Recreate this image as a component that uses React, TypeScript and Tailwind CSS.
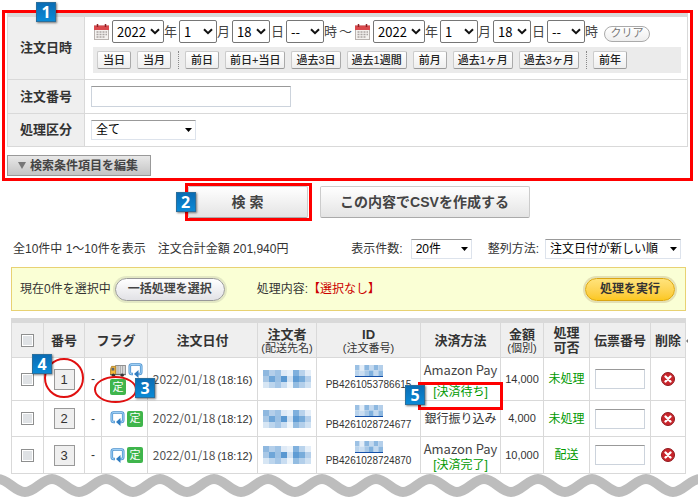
import clsx from "clsx";
import type { ReactNode } from "react";

const years = ["2022", "2021", "2020"];
const months = Array.from({ length: 12 }, (_, i) => String(i + 1));
const days = Array.from({ length: 31 }, (_, i) => String(i + 1));
const hours = ["--", ...Array.from({ length: 24 }, (_, i) => String(i))];

const quickRanges = [
  ["当日", "当月"],
  ["前日", "前日+当日", "過去3日", "過去1週間", "前月", "過去1ヶ月", "過去3ヶ月"],
  ["前年"],
];

interface Order {
  no: number;
  truck: boolean;
  time: string;
  id: string;
  pay: string;
  payStatus?: string;
  amount: string;
  state: string;
}

const orders: Order[] = [
  {
    no: 1,
    truck: true,
    time: "(18:16)",
    id: "PB4261053786615",
    pay: "Amazon Pay",
    payStatus: "[決済待ち]",
    amount: "14,000",
    state: "未処理",
  },
  {
    no: 2,
    truck: false,
    time: "(18:12)",
    id: "PB4261028724677",
    pay: "銀行振り込み",
    amount: "4,000",
    state: "未処理",
  },
  {
    no: 3,
    truck: false,
    time: "(18:12)",
    id: "PB4261028724870",
    pay: "Amazon Pay",
    payStatus: "[決済完了]",
    amount: "10,000",
    state: "配送",
  },
];

const Step = ({ n, className }: { n: number; className: string }) => (
  <span
    className={clsx(
      "absolute z-10 flex size-5 items-center justify-center border border-[#2a6f9c] bg-linear-to-b from-[#0a6cb4] to-[#0a8ad6] font-['Open_Sans'] text-base leading-none font-bold text-white shadow-[1px_1px_2px_rgba(0,0,0,0.5)]",
      className,
    )}
  >
    {n}
  </span>
);

const CalendarIcon = () => (
  <svg viewBox="0 0 15 16" className="h-4 w-[15px] shrink-0">
    <rect x="0.5" y="2" width="14" height="13.5" fill="#f4f1ef" stroke="#b9b3b0" />
    <rect x="0" y="1.5" width="15" height="4.5" fill="#d9484c" />
    <path d="M3.5 0v3M11.5 0v3" stroke="#8d2024" strokeWidth="1.5" />
    <path
      d="M2.5 8h2m1 0h2m1 0h2m1 0h1.5M2.5 10.5h2m1 0h2m1 0h2m1 0h1.5M2.5 13h2m1 0h2m1 0h2"
      stroke="#a9a4a2"
      strokeWidth="1.5"
    />
  </svg>
);

const TruckIcon = () => (
  <svg viewBox="0 0 17 13" className="h-3 w-4">
    <rect x="6" y="0.5" width="10.5" height="9.5" fill="#dcdcdc" stroke="#8a8a8a" />
    <path d="M8.5 1v9M11 1v9M13.5 1v9" stroke="#a2a2a2" />
    <path d="M0.5 10.5V4.5L1.5 1.5H6v9z" fill="#f3b93c" stroke="#b98320" />
    <rect x="1.5" y="3" width="3" height="3" fill="#5d6670" />
    <path d="M0 10.5h17" stroke="#555" />
    <circle cx="3.5" cy="11" r="1.8" fill="#333" />
    <circle cx="13" cy="11" r="1.8" fill="#333" />
  </svg>
);

const RepeatIcon = () => (
  <svg viewBox="0 0 15 15" className="size-[15px]" fill="none">
    <path
      d="M5 11H3.5Q1.8 11 1.8 9.3V3.2Q1.8 1.5 3.5 1.5h8Q13.2 1.5 13.2 3.2V9.3Q13.2 11 11.5 11H10"
      stroke="#4a90cc"
      strokeWidth="2.6"
    />
    <path
      d="M4.5 11H3.5Q1.8 11 1.8 9.3V3.2Q1.8 1.5 3.5 1.5h8Q13.2 1.5 13.2 3.2V9.3Q13.2 11 11.5 11H10"
      stroke="#9fd0f7"
      strokeWidth="1.1"
    />
    <path d="M10.5 7v8L6 11z" fill="#2f7cc0" />
  </svg>
);

const TeiIcon = () => (
  <span className="flex size-4 items-center justify-center rounded-xs bg-[#3fb54c] text-[11px] leading-none text-white">
    定
  </span>
);

const DeleteIcon = () => (
  <svg viewBox="0 0 14 14" className="size-3.5">
    <circle cx="7" cy="7" r="6.5" fill="#c9252b" stroke="#8f1b20" />
    <path d="M4.5 4.5l5 5M9.5 4.5l-5 5" stroke="#fff" strokeWidth="2.4" strokeLinecap="round" />
  </svg>
);

const nameTones = [
  ["#8fb8df", "#b4cfea", "#9fc3e5", "#dfeaf6", "#e9f1f9", "#7fb0dd", "#b9d3ec", "#e4eef8"],
  ["#a9c8e6", "#6fa6d8", "#9cc1e4", "#5a98d1", "#d0e1f2", "#5f9cd4", "#78acda", "#b5d0eb"],
  ["#d7e6f4", "#bcd5ed", "#a6c7e7", "#c9ddf1", "#edf4fa", "#93bce1", "#b3cfea", "#cfe1f2"],
];

const idTones = [
  ["#9cc1e4", "#e4eef8", "#8db8e0", "#c3d9ef", "#8db8e0", "#b4cfea"],
  ["#b9d3ec", "#c9ddf1", "#a7c8e7", "#7fb0dd", "#c3d9ef", "#8db8e0"],
];

const Mosaic = ({ tones, size, className }: { tones: string[][]; size: number; className: string }) => (
  <svg
    viewBox={`0 0 ${tones[0].length * size} ${tones.length * size}`}
    preserveAspectRatio="none"
    className={className}
    aria-hidden="true"
  >
    {tones.map((row, y) =>
      row.map((fill, x) => (
        <rect key={`${x}-${y}`} x={x * size} y={y * size} width={size} height={size} fill={fill} />
      )),
    )}
  </svg>
);

const Chevron = () => (
  <svg
    viewBox="0 0 10 7"
    className="pointer-events-none absolute top-2 right-1 h-[7px] w-2.5"
    fill="none"
    stroke="#111"
    strokeWidth="2"
  >
    <path d="M1 1.2l4 4 4-4" />
  </svg>
);

interface DateSelectProps {
  label: string;
  options: string[];
  value: string;
  wide?: boolean;
}

const DateSelect = ({ label, options, value, wide }: DateSelectProps) => (
  <span className={clsx("relative shrink-0", wide ? "w-[52px]" : "w-[38px]")}>
    <select
      aria-label={label}
      defaultValue={value}
      className="block h-[23px] w-full appearance-none rounded-xs border border-[#767676] bg-white pl-1 font-['Noto_Sans_CJK_JP'] text-[13px] leading-5 text-black"
    >
      {options.map((o) => (
        <option key={o}>{o}</option>
      ))}
    </select>
    <Chevron />
  </span>
);

const DateGroup = ({ label }: { label: string }) => (
  <div className="flex items-center text-[13px] text-[#444]">
    <button type="button" aria-label={`${label}カレンダー`} className="mr-[3px]">
      <CalendarIcon />
    </button>
    <DateSelect label={`${label}年`} options={years} value="2022" wide />
    <span className="w-[15px]">年</span>
    <DateSelect label={`${label}月`} options={months} value="1" />
    <span className="w-[15px]">月</span>
    <DateSelect label={`${label}日`} options={days} value="18" />
    <span className="w-4 pl-px">日</span>
    <DateSelect label={`${label}時`} options={hours} value="--" />
    <span>時</span>
  </div>
);

interface ListSelectProps {
  id: string;
  options: string[];
  className: string;
}

const ListSelect = ({ id, options, className }: ListSelectProps) => (
  <span className={clsx("relative inline-block", className)}>
    <select
      id={id}
      className="block h-5 w-full appearance-none border border-[#dde3ec] border-t-[#999] bg-white pl-1 text-xs leading-4 text-black"
    >
      {options.map((o) => (
        <option key={o}>{o}</option>
      ))}
    </select>
    <svg viewBox="0 0 7 4" className="pointer-events-none absolute top-2 right-1 h-1 w-[7px]">
      <path d="M0 0h7L3.5 4z" fill="#000" />
    </svg>
  </span>
);

const Row = ({ label, htmlFor, children }: { label: string; htmlFor: string; children: ReactNode }) => (
  <div className="flex border-b border-[#d9d9d9]">
    <label
      htmlFor={htmlFor}
      className="flex w-[77px] shrink-0 items-center justify-center border-r border-[#d9d9d9] bg-[#efefef] text-[13px] font-bold"
    >
      {label}
    </label>
    <div className="min-w-0 flex-1 py-1.5 pl-1.5">{children}</div>
  </div>
);

const SearchConditions = () => (
  <section className="relative mt-2.5 mr-[5px] ml-0.5 border-3 border-[#ff0000] pl-0.5">
    <Step n={1} className="-top-[11px] left-[31px]" />
    <div className="mr-0.5 border-t-4 border-r border-l border-[#d9d9d9]">
      <Row label="注文日時" htmlFor="quick-today">
        <div className="-mt-[3px] flex items-center pl-[3px]">
          <DateGroup label="開始" />
          <span className="w-[18px] pl-0.5 text-[13px] text-[#444]">～</span>
          <DateGroup label="終了" />
          <button
            type="button"
            className="mt-1 ml-1.5 h-4 w-[46px] rounded-full border border-[#aaa] bg-linear-to-b from-white to-[#eee] text-[11px] leading-none text-[#777]"
          >
            クリア
          </button>
        </div>
        <div className="mt-1 mr-1.5 ml-0.5 flex bg-[#ebebeb] px-1 py-1">
          {quickRanges.map((group, i) => (
            <div
              key={i}
              className={clsx("flex gap-1.5", i > 0 && "ml-[7px] border-l border-dotted border-[#888] pl-1.5")}
            >
              {group.map((q) => (
                <button
                  key={q}
                  id={q === "当日" ? "quick-today" : undefined}
                  type="button"
                  className={clsx(
                    "h-[18px] rounded-xs border border-[#ccc] border-r-[#aaa] border-b-[#999] bg-linear-to-b from-white to-[#eee] text-[11px] leading-none font-medium whitespace-nowrap text-[#222]",
                    q.length > 2 ? "px-1" : "px-[5px]",
                  )}
                >
                  {q}
                </button>
              ))}
            </div>
          ))}
        </div>
      </Row>
      <Row label="注文番号" htmlFor="order-no">
        <input
          id="order-no"
          type="text"
          className="block h-[21px] w-[200px] border border-[#ccd3dc] border-t-[#999] bg-white px-1 text-xs"
        />
      </Row>
      <Row label="処理区分" htmlFor="kind">
        <ListSelect id="kind" options={["全て", "未処理", "配送"]} className="w-[105px] align-top" />
      </Row>
    </div>
    <button
      type="button"
      className="mt-2 mb-0.5 flex h-[21px] w-36 items-center gap-1 border border-[#999] bg-linear-to-b from-[#e8e8e8] to-[#c4c4c4] pl-2.5 text-xs leading-none font-bold whitespace-nowrap text-[#444]"
    >
      <svg viewBox="0 0 8 7" className="h-[7px] w-2">
        <path d="M0 0h8L4 7z" fill="#777" />
      </svg>
      検索条件項目を編集
    </button>
  </section>
);

const bigButton =
  "rounded-xs border border-[#ccc] border-b-[#aaa] bg-linear-to-b from-white to-[#e4e4e4] text-sm font-bold text-[#444]";

const cell = "border border-[#d9d9d9] p-0 text-center align-middle";

const OrderRow = ({ order }: { order: Order }) => {
  const first = order.no === 1;
  return (
    <tr className={clsx(first ? "h-[43px]" : "h-9")}>
      <td className={cell}>
        <input
          type="checkbox"
          aria-label={`注文${order.no}を選択`}
          className="mx-auto block size-[13px] appearance-none border border-[#8e8f8f] bg-[#dfe2e5] shadow-[inset_0_0_0_1px_#fff]"
        />
      </td>
      <td className={clsx(cell, "relative")}>
        <button
          type="button"
          className="mx-auto block h-[21px] w-[21px] border border-[#999] bg-[#efefef] text-[13px] leading-none"
        >
          {order.no}
        </button>
        {first && (
          <>
            <span className="absolute top-0 left-0 size-10 rounded-full border-2 border-[#e01010]" />
            <Step n={4} className="-top-1 -left-3" />
          </>
        )}
      </td>
      <td className={cell}>-</td>
      <td className={clsx(cell, "relative")}>
        <div className="flex flex-wrap items-center gap-x-0.5 gap-y-px pl-2">
          {order.truck && <TruckIcon />}
          <RepeatIcon />
          <TeiIcon />
        </div>
        {first && (
          <>
            <span className="absolute top-[18px] -left-2 h-[27px] w-[43px] rounded-[50%] border-2 border-[#e01010]" />
            <Step n={3} className="top-5 left-[33px]" />
          </>
        )}
      </td>
      <td className={clsx(cell, "whitespace-nowrap")}>
        <span className="font-['Noto_Sans_CJK_JP'] text-xs text-[#555]">2022/01/18</span>
        <span className="pl-0.5 text-[11px]">{order.time}</span>
      </td>
      <td className={cell}>
        <Mosaic tones={nameTones} size={6} className="mx-auto h-[18px] w-12" />
      </td>
      <td className={cell}>
        <a href="#" aria-label="注文者ID" className="mx-auto block w-7 border-b border-[#1450a8]">
          <Mosaic tones={idTones} size={5} className="h-[11px] w-7" />
        </a>
        <div className="text-[10px] leading-4">{order.id}</div>
      </td>
      <td className={clsx(cell, "relative whitespace-nowrap", order.payStatus && "pt-1")}>
        <div
          className={clsx(
            "leading-4",
            order.payStatus && "font-['Noto_Sans_CJK_JP'] text-[13px] text-[#444]",
          )}
        >
          {order.pay}
        </div>
        {order.payStatus && (
          <div className={clsx("leading-4 text-[#009900]", first && "mt-1.5")}>{order.payStatus}</div>
        )}
        {first && (
          <>
            <span className="absolute top-6 -left-[3px] h-[28px] w-[85px] border-3 border-[#ff0000]" />
            <Step n={5} className="top-[27px] -left-4" />
          </>
        )}
      </td>
      <td className={clsx(cell, "text-[11px]")}>{order.amount}</td>
      <td className={clsx(cell, "text-[#009900]")}>{order.state}</td>
      <td className={cell}>
        <input
          type="text"
          aria-label={`注文${order.no}の伝票番号`}
          className="mx-auto block h-5 w-[50px] border border-[#ccd3dc] border-t-[#999] bg-white"
        />
      </td>
      <td className={cell}>
        <button type="button" aria-label={`注文${order.no}を削除`} className="mx-auto block">
          <DeleteIcon />
        </button>
      </td>
    </tr>
  );
};

const head = "border border-[#d9d9d9] bg-[#efefef] p-0 text-[13px] leading-[15px] font-bold";
const sub = "text-[11px] leading-3 font-normal whitespace-nowrap";

const OrderTable = () => (
  <table className="mt-[7px] w-full table-fixed border-collapse border-t-5 border-[#d9d9d9] text-xs">
    <colgroup>
      <col className="w-8" />
      <col className="w-[41px]" />
      <col className="w-[17px]" />
      <col className="w-[46px]" />
      <col className="w-[110px]" />
      <col className="w-[59px]" />
      <col className="w-[104px]" />
      <col className="w-20" />
      <col className="w-[43px]" />
      <col className="w-[46px]" />
      <col className="w-[61px]" />
      <col />
    </colgroup>
    <thead>
      <tr className="h-[37px]">
        <th className={head}>
          <input
            type="checkbox"
            aria-label="すべて選択"
            className="mx-auto block size-[13px] appearance-none border border-[#8e8f8f] bg-[#dfe2e5] shadow-[inset_0_0_0_1px_#fff]"
          />
        </th>
        <th className={head}>番号</th>
        <th className={head} colSpan={2}>
          フラグ
        </th>
        <th className={head}>注文日付</th>
        <th className={head}>
          注文者
          <div className={sub}>(配送先名)</div>
        </th>
        <th className={head}>
          ID
          <div className={sub}>(注文番号)</div>
        </th>
        <th className={head}>決済方法</th>
        <th className={head}>
          金額
          <div className={sub}>(個別)</div>
        </th>
        <th className={head}>
          処理
          <br />
          可否
        </th>
        <th className={head}>伝票番号</th>
        <th className={clsx(head, "relative")}>
          削除
          <svg viewBox="0 0 2 4" className="absolute top-4 -right-[3px] h-1 w-0.5">
            <path d="M2 0v4L0 2z" fill="#777" />
          </svg>
        </th>
      </tr>
    </thead>
    <tbody>
      {orders.map((order) => (
        <OrderRow key={order.no} order={order} />
      ))}
    </tbody>
  </table>
);

// repeating torn edge under the list
const Wave = () => (
  <svg className="relative -mt-1 block h-[30px] w-full" aria-hidden="true">
    <defs>
      <pattern id="wave" x="-2" width="54" height="30" patternUnits="userSpaceOnUse">
        <path
          d="M-54 22C-44 22-37 9-27 9S-10 22 0 22 17 9 27 9 44 22 54 22V30H-54z"
          fill="#fff"
          transform="translate(27 0)"
        />
        <path
          d="M-54 22C-44 22-37 9-27 9S-10 22 0 22 17 9 27 9 44 22 54 22 71 9 81 9"
          fill="none"
          stroke="#bdbdbd"
          strokeWidth="10"
          transform="translate(27 0)"
        />
      </pattern>
    </defs>
    <rect width="100%" height="30" fill="url(#wave)" />
  </svg>
);

const App = () => {
  return (
    <main className="flow-root overflow-hidden bg-white font-['Liberation_Sans','Noto_Sans_CJK_JP',sans-serif] text-xs text-[#333]">
      <SearchConditions />

      <div className="mt-0.5 flex items-center justify-center gap-2 pr-0 pl-4">
        <div className="relative border-3 border-[#ff0000] pr-px">
          <Step n={2} className="top-1.5 -left-3" />
          <button type="button" className={clsx(bigButton, "h-8 w-[120px]")}>
            検 索
          </button>
        </div>
        <button type="button" className={clsx(bigButton, "h-8 w-[210px]")}>
          この内容でCSVを作成する
        </button>
      </div>

      <div className="mt-[18px] flex items-center pr-[17px] pl-[13px] whitespace-nowrap">
        <span>全10件中 1～10件を表示</span>
        <span className="ml-3">注文合計金額 201,940円</span>
        <label htmlFor="per-page" className="mr-2 ml-auto">
          表示件数:
        </label>
        <ListSelect id="per-page" options={["20件", "50件", "100件"]} className="w-[61px]" />
        <label htmlFor="sort" className="mr-1.5 ml-4">
          整列方法:
        </label>
        <ListSelect id="sort" options={["注文日付が新しい順", "注文日付が古い順"]} className="w-[136px]" />
      </div>

      <div className="mr-3 ml-[11px]">
        <div className="mt-2 flex h-11 items-center border border-[#e8d273] bg-[#faffd5] pr-2.5 pl-2">
          <span>現在0件を選択中</span>
          <button
            type="button"
            className="ml-1 h-[23px] w-[110px] rounded-full border border-[#999] bg-linear-to-b from-white to-[#e2e2e6] text-xs leading-none font-bold text-[#444] shadow-[0_0_0_2px_#e3e8c4]"
          >
            一括処理を選択
          </button>
          <span className="ml-8">
            処理内容:<span className="text-[#cc0000]">【選択なし】</span>
          </span>
          <button
            type="button"
            className="ml-auto h-[23px] w-[90px] rounded-full border border-[#d9a514] bg-linear-to-b from-[#ffe37a] to-[#fcc81c] text-xs leading-none font-bold text-[#333] shadow-[0_0_0_2px_#e3e0b4]"
          >
            処理を実行
          </button>
        </div>
        <OrderTable />
      </div>
      <Wave />
    </main>
  );
};

export default App;
